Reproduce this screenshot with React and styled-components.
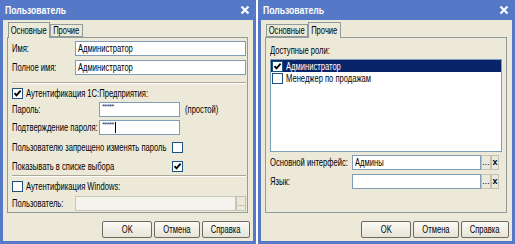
import React from "react";
import styled, { createGlobalStyle } from "styled-components";

const GlobalStyle = createGlobalStyle`
  body {
    margin: 0;
    background: #fff;
    font-family: "Liberation Sans", Arial, sans-serif;
    font-size: 10px;
    color: #000;
  }
`;

const Screen = styled.div`
  display: flex;
  gap: 2px;
  width: 515px;
  height: 244px;
  background: #fff;
`;

const Window = styled.div`
  width: ${(p) => p.$width}px;
  height: 244px;
  box-sizing: border-box;
  display: flex;
  flex-direction: column;
  background: #ece9d8;
  border: 3px solid #5579c7;
  border-top: none;
`;

// narrow system font look: Arial squeezed horizontally
const Txt = styled.span`
  display: inline-block;
  white-space: nowrap;
  transform: scaleX(${(p) => p.$sx || 0.76});
  transform-origin: ${(p) => (p.$center ? "center" : "left")} center;
`;

const TitleBar = styled.div`
  height: 20px;
  margin: 0 -3px;
  padding: 0 6px 0 5px;
  display: flex;
  align-items: center;
  justify-content: space-between;
  background: #5579c7;
  color: #fff;
  font-size: 10.5px;
  font-weight: bold;
`;

const Body = styled.div`
  flex: 1;
  display: flex;
  flex-direction: column;
  padding: 2px 5px 3px 4px;
`;

const TabStrip = styled.div`
  display: flex;
  align-items: flex-end;
  height: 15px;
  padding-left: 1px;
`;

const Tab = styled.div`
  position: relative;
  box-sizing: border-box;
  width: ${(p) => p.$width}px;
  height: ${(p) => (p.$active ? 16 : 13)}px;
  margin-bottom: ${(p) => (p.$active ? -1 : 0)}px;
  border: 1px solid #919b9c;
  border-bottom: ${(p) => (p.$active ? "none" : "1px solid #919b9c")};
  background: #ece9d8;
  z-index: ${(p) => (p.$active ? 1 : 0)};
  display: flex;
  align-items: center;
  justify-content: center;
  padding-bottom: ${(p) => (p.$active ? 1 : 0)}px;
`;

const Panel = styled.div`
  flex: 1;
  box-sizing: border-box;
  border: 1px solid #919b9c;
  display: flex;
  flex-direction: column;
  padding: 2px 1px 0 4px;
`;

const Row = styled.div`
  display: flex;
  align-items: center;
  height: ${(p) => p.$h || 15}px;
  margin-top: ${(p) => p.$mt || 0}px;
  margin-right: ${(p) => p.$mr || 0}px;
`;

const Label = styled(Txt)`
  width: ${(p) => p.$w}px;
  flex: none;
`;

const TextBox = styled.div`
  box-sizing: border-box;
  height: 15px;
  width: ${(p) => (p.$w ? `${p.$w}px` : "auto")};
  flex: ${(p) => (p.$w ? "none" : 1)};
  border: 1px solid ${(p) => (p.$disabled ? "#c9c7ba" : "#7f9db9")};
  background: ${(p) => (p.$disabled ? "#f4f3ee" : "#fff")};
  padding: 0 2px;
  display: flex;
  align-items: center;
  overflow: hidden;
`;

const Stars = styled.span`
  font-size: 8px;
  letter-spacing: -0.8px;
  color: #2b3d6b;
  align-self: flex-start;
  margin-top: -1px;
`;

const Caret = styled.span`
  width: 1px;
  height: 11px;
  background: #000;
  margin-left: 1px;
`;

const Hint = styled(Txt)`
  margin-left: 5px;
`;

const SmallButton = styled.div`
  box-sizing: border-box;
  width: ${(p) => p.$w || 10}px;
  height: 15px;
  flex: none;
  border: 1px solid #c3c1b5;
  background: #ece9d8;
  display: flex;
  align-items: center;
  justify-content: center;
  font-size: 9px;
  font-weight: ${(p) => (p.$bold ? "bold" : "normal")};
  color: ${(p) => (p.$muted ? "#8a887d" : "#000")};
  line-height: 1;
`;

const Separator = styled.div`
  height: 0;
  border-top: 1px solid #aca899;
  border-bottom: 1px solid #fff;
  margin: ${(p) => p.$m};
`;

const Box = styled.span`
  box-sizing: border-box;
  width: 11px;
  height: 11px;
  flex: none;
  border: 1px solid #1c5180;
  background: #fff;
  display: inline-flex;
  align-items: center;
  justify-content: center;
  margin-right: ${(p) => p.$mr || 0}px;
`;

const Spacer = styled.div`
  flex: 1;
`;

const List = styled.div`
  box-sizing: border-box;
  height: 93px;
  margin: 2px 3px 0 0;
  border: 1px solid #7f9db9;
  background: #fff;
  display: flex;
  flex-direction: column;
`;

const ListItem = styled.div`
  height: 12px;
  display: flex;
  align-items: center;
  padding-left: 1px;
  background: ${(p) => (p.$selected ? "#0a246a" : "transparent")};
  color: ${(p) => (p.$selected ? "#fff" : "#000")};
`;

const Footer = styled.div`
  display: flex;
  justify-content: flex-end;
  gap: 2px;
  margin-top: 8px;
  margin-right: -2px;
`;

const Button = styled.div`
  box-sizing: border-box;
  width: ${(p) => p.$w}px;
  height: 17px;
  border: 1px solid #6b6a63;
  border-radius: 2px;
  background: linear-gradient(#fbfaf6, #e6e3d6);
  display: flex;
  align-items: center;
  justify-content: center;
`;

function Check({ on }) {
  return (
    <svg width="9" height="9" viewBox="0 0 9 9">
      {on && <path d="M1.5 4.2 L3.5 6.4 L7.6 1.6" fill="none" stroke="#000" strokeWidth="1.8" />}
    </svg>
  );
}

function CheckBox({ on, mr }) {
  return (
    <Box $mr={mr}>
      <Check on={on} />
    </Box>
  );
}

function CloseIcon() {
  return (
    <svg width="10" height="10" viewBox="0 0 10 10">
      <path d="M1.5 1.5 L8.5 8.5 M8.5 1.5 L1.5 8.5" stroke="#fff" strokeWidth="2.2" />
    </svg>
  );
}

function Buttons() {
  return (
    <Footer>
      <Button $w={50}><Txt $center>OK</Txt></Button>
      <Button $w={46}><Txt $center>Отмена</Txt></Button>
      <Button $w={48}><Txt $center>Справка</Txt></Button>
    </Footer>
  );
}

function MainTab() {
  return (
    <Panel>
      <Row $h={16}>
        <Label $w={63}>Имя:</Label>
        <TextBox><Txt>Администратор</Txt></TextBox>
      </Row>
      <Row $h={16} $mt={3}>
        <Label $w={63}>Полное имя:</Label>
        <TextBox><Txt>Администратор</Txt></TextBox>
      </Row>
      <Separator $m="7px 0 3px 0" />
      <Row $h={12}>
        <CheckBox on mr={3} />
        <Txt>Аутентификация 1С:Предприятия:</Txt>
      </Row>
      <Row $mt={3}>
        <Label $w={87}>Пароль:</Label>
        <TextBox $w={81}>
          <Stars>*****</Stars>
        </TextBox>
        <Hint>(простой)</Hint>
      </Row>
      <Row $mt={3}>
        <Label $w={87}>Подтверждение пароля:</Label>
        <TextBox $w={81}>
          <Stars>*****</Stars>
          <Caret />
        </TextBox>
      </Row>
      <Row $h={13} $mt={6}>
        <Label $w={160}>Пользователю запрещено изменять пароль</Label>
        <CheckBox />
      </Row>
      <Row $h={13} $mt={6}>
        <Label $w={160}>Показывать в списке выбора</Label>
        <CheckBox on />
      </Row>
      <Separator $m="2px 0 3px 0" />
      <Row $h={12}>
        <CheckBox mr={3} />
        <Txt>Аутентификация Windows:</Txt>
      </Row>
      <Row $mt={4}>
        <Label $w={63}>Пользователь:</Label>
        <TextBox $disabled />
        <SmallButton $muted>...</SmallButton>
      </Row>
    </Panel>
  );
}

function OtherTab() {
  return (
    <Panel>
      <Row $h={14} $mt={3}>
        <Txt>Доступные роли:</Txt>
      </Row>
      <List>
        <ListItem $selected>
          <CheckBox on mr={3} />
          <Txt>Администратор</Txt>
        </ListItem>
        <ListItem>
          <CheckBox mr={3} />
          <Txt>Менеджер по продажам</Txt>
        </ListItem>
      </List>
      <Row $mt={3} $mr={6}>
        <Label $w={82}>Основной интерфейс:</Label>
        <TextBox><Txt>Админы</Txt></TextBox>
        <SmallButton>...</SmallButton>
        <SmallButton $w={8} $bold>x</SmallButton>
      </Row>
      <Row $mt={4} $mr={6}>
        <Label $w={82}>Язык:</Label>
        <TextBox />
        <SmallButton>...</SmallButton>
        <SmallButton $w={8} $bold>x</SmallButton>
      </Row>
      <Spacer />
    </Panel>
  );
}

function UserWindow({ width, active }) {
  return (
    <Window $width={width}>
      <TitleBar>
        <Txt $sx={0.82}>Пользователь</Txt>
        <CloseIcon />
      </TitleBar>
      <Body>
        <TabStrip>
          <Tab $width={42} $active={active === "main"}><Txt $center>Основные</Txt></Tab>
          <Tab $width={33} $active={active === "other"}><Txt $center>Прочие</Txt></Tab>
        </TabStrip>
        {active === "main" ? <MainTab /> : <OtherTab />}
        <Buttons />
      </Body>
    </Window>
  );
}

export default function App() {
  return (
    <>
      <GlobalStyle />
      <Screen>
        <UserWindow width={256} active="main" />
        <UserWindow width={257} active="other" />
      </Screen>
    </>
  );
}
